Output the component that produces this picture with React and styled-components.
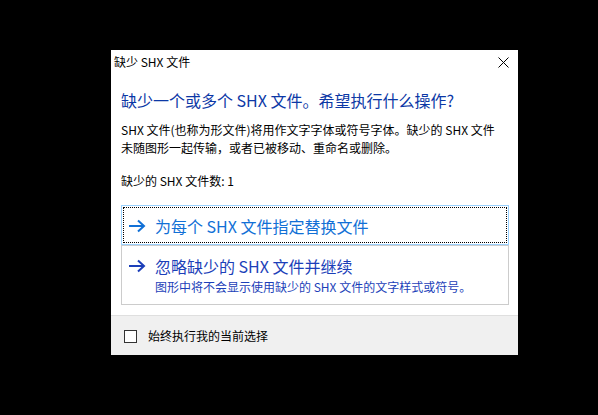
import React from "react";
import styled, { createGlobalStyle } from "styled-components";

const GlobalStyle = createGlobalStyle`
    html, body {
        margin: 0;
        padding: 0;
        background: #000;
    }
    body {
        font-family: "Noto Sans CJK SC", "Noto Sans", sans-serif;
    }
`;

const Screen = styled.div`
    width: 598px;
    height: 415px;
    box-sizing: border-box;
    padding: 50px 0 0 111px;
    background: #000;
`;

const Dialog = styled.div`
    width: 407px;
    height: 305px;
    background: #fff;
    display: flex;
    flex-direction: column;
    color: #000;
`;

const TitleBar = styled.div`
    height: 24px;
    display: flex;
    align-items: center;
    justify-content: space-between;
    padding: 0 9px 0 3px;
    flex-shrink: 0;
`;

const TitleText = styled.span`
    font-size: 12px;
    line-height: 16px;
`;

const CloseButton = styled.button`
    border: 0;
    background: transparent;
    padding: 0;
    width: 12px;
    height: 12px;
    display: flex;
    align-items: center;
    justify-content: center;
`;

const Content = styled.div`
    flex: 1;
    padding: 0 9px 0 10px;
    display: flex;
    flex-direction: column;
`;

const Heading = styled.h1`
    margin: 15px 0 0;
    font-size: 16px;
    line-height: 22px;
    font-weight: normal;
    color: #0c38a6;
`;

const Paragraph = styled.p`
    margin: ${(p) => p.$top || 0}px 0 0;
    font-size: 12px;
    line-height: 18px;
`;

const LinkList = styled.div`
    margin-top: 15px;
    display: flex;
    flex-direction: column;
`;

const CommandLink = styled.button`
    box-sizing: border-box;
    width: 388px;
    height: ${(p) => p.$height}px;
    border: 1px solid ${(p) => (p.$hot ? "#99d1ff" : "#cccccc")};
    background: #fff;
    padding: ${(p) => p.$pad}px 0 0 6px;
    display: flex;
    align-items: flex-start;
    text-align: left;
    font-family: inherit;
    cursor: pointer;
    outline: ${(p) => (p.$hot ? "1px dotted #000" : "none")};
    outline-offset: -3px;
    color: ${(p) => (p.$hot ? "#1170d6" : "#1c3fb9")};
`;

const Arrow = styled.svg`
    flex-shrink: 0;
    margin-top: 4px;
`;

const LinkBody = styled.div`
    margin-left: 9px;
    display: flex;
    flex-direction: column;
`;

const LinkTitle = styled.span`
    font-size: 16px;
    line-height: 22px;
`;

const LinkNote = styled.span`
    font-size: 12px;
    line-height: 18px;
    margin-top: 1px;
`;

const Footer = styled.div`
    height: 40px;
    flex-shrink: 0;
    box-sizing: border-box;
    border-top: 1px solid #dfdfdf;
    background: #f0f0f0;
    display: flex;
    align-items: center;
    padding-left: 13px;
`;

const CheckBox = styled.span`
    width: 13px;
    height: 13px;
    box-sizing: border-box;
    border: 1px solid #333;
    background: #fff;
    margin-top: 1px;
`;

const FooterLabel = styled.span`
    margin-left: 11px;
    font-size: 12px;
    line-height: 16px;
`;

function ArrowIcon() {
    return (
        <Arrow width="18" height="14" viewBox="0 0 18 14" fill="none">
            <path d="M1 7h15M10 1.5L16 7l-6 5.5" stroke="currentColor" strokeWidth="2" />
        </Arrow>
    );
}

export default function App() {
    return (
        <>
            <GlobalStyle />
            <Screen>
                <Dialog>
                    <TitleBar>
                        <TitleText>缺少 SHX 文件</TitleText>
                        <CloseButton aria-label="关闭">
                            <svg width="11" height="11" viewBox="0 0 11 11">
                                <path d="M0.5 0.5l10 10M10.5 0.5l-10 10" stroke="#000" strokeWidth="1" />
                            </svg>
                        </CloseButton>
                    </TitleBar>
                    <Content>
                        <Heading>缺少一个或多个 SHX 文件。希望执行什么操作?</Heading>
                        <Paragraph $top={10}>
                            SHX 文件(也称为形文件)将用作文字字体或符号字体。缺少的 SHX 文件
                            <br />
                            未随图形一起传输，或者已被移动、重命名或删除。
                        </Paragraph>
                        <Paragraph $top={15}>缺少的 SHX 文件数: 1</Paragraph>
                        <LinkList>
                            <CommandLink $hot $height={40} $pad={9}>
                                <ArrowIcon />
                                <LinkBody>
                                    <LinkTitle>为每个 SHX 文件指定替换文件</LinkTitle>
                                </LinkBody>
                            </CommandLink>
                            <CommandLink $height={60} $pad={9}>
                                <ArrowIcon />
                                <LinkBody>
                                    <LinkTitle>忽略缺少的 SHX 文件并继续</LinkTitle>
                                    <LinkNote>图形中将不会显示使用缺少的 SHX 文件的文字样式或符号。</LinkNote>
                                </LinkBody>
                            </CommandLink>
                        </LinkList>
                    </Content>
                    <Footer>
                        <CheckBox />
                        <FooterLabel>始终执行我的当前选择</FooterLabel>
                    </Footer>
                </Dialog>
            </Screen>
        </>
    );
}
